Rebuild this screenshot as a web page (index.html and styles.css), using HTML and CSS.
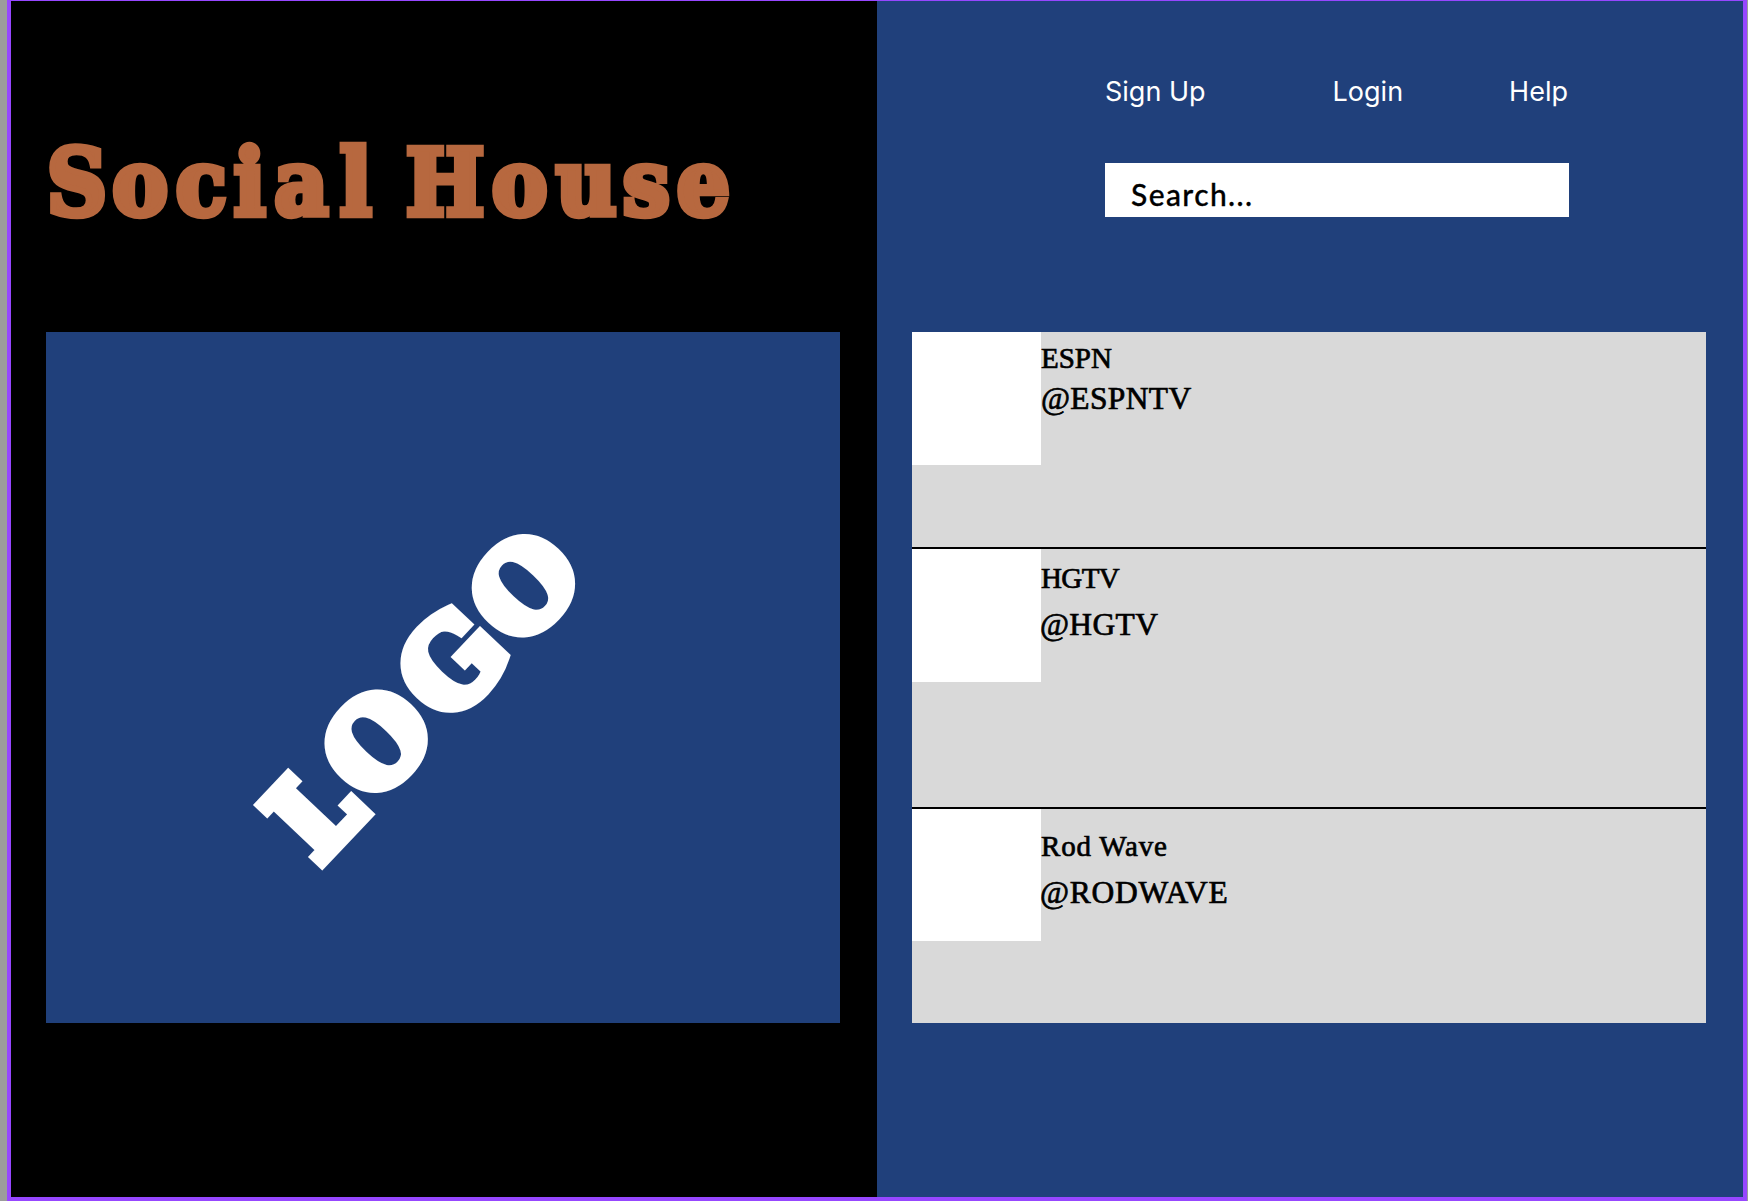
FILE: index.html
```html
<!DOCTYPE html>
<html lang="en">
<head>
<meta charset="utf-8">
<title>Social House</title>
<link rel="stylesheet" href="styles.css">
</head>
<body>
<div class="frame">
  <main class="brand">
    <h1 class="title">
      <svg class="wordmark" viewBox="0 0 720 110" role="img">
        <text y="76.5" x="1 66.5 130 188 228.5 294 330 360 446 510 577 631">Social House</text>
      </svg>
    </h1>
    <div class="card">
      <svg class="logo" viewBox="0 0 794 691">
        <text transform="translate(276.2 538.7) rotate(-46.6)" y="-6.5 -8.5 -8.5 -8.5" x="2 82 192 296"><tspan class="narrow">L</tspan>OGO</text>
      </svg>
    </div>
  </main>
  <section class="side">
    <nav class="nav">
      <a>Sign Up</a>
      <a class="login">Login</a>
      <a>Help</a>
    </nav>
    <div class="search"><span>Search...</span></div>
    <ul class="feed">
      <li class="row first">
        <div class="avatar"></div>
        <div class="who"><p class="name">ESPN</p><p class="handle">@ESPNTV</p></div>
      </li>
      <li class="row second">
        <div class="avatar"></div>
        <div class="who"><p class="name">HGTV</p><p class="handle">@HGTV</p></div>
      </li>
      <li class="row third">
        <div class="avatar"></div>
        <div class="who"><p class="name">Rod Wave</p><p class="handle">@RODWAVE</p></div>
      </li>
    </ul>
  </section>
</div>
</body>
</html>
```
FILE: styles.css
```css
* { box-sizing: border-box; margin: 0; padding: 0; }
body { width: 1748px; height: 1201px; padding: 0 1px 0 7px; background: #9c9c9c; overflow: hidden; }
.frame { display: flex; height: 1201px; border: 4px solid #9747ff; border-top-width: 1px; }
.brand { width: 866px; padding: 137px 0 0 35px; background: #000; }
.title { height: 194px; }
.wordmark { display: block; width: 720px; height: 110px; overflow: visible; font: bold 92px "DejaVu Serif Condensed", "DejaVu Serif", serif; font-stretch: condensed; fill: #b7683f; stroke: #b7683f; stroke-width: 6.5px; }
.card { width: 794px; height: 691px; background: #20407b; }
.logo { display: block; width: 794px; height: 691px; font: bold 113px "DejaVu Serif", serif; fill: #fff; stroke: #fff; stroke-width: 13px; }
.narrow { font-family: "DejaVu Serif Condensed", "DejaVu Serif", serif; font-stretch: condensed; }
.side { flex: 1; background: #20407b; padding-left: 35px; }
.nav { display: flex; justify-content: space-between; width: 463px; margin: 73px 0 0 193px; height: 36px; font: 400 27px/36px Inter, sans-serif; color: #fff; }
.login { margin-left: 21px; }
.search { width: 464px; height: 54px; margin: 53px 0 0 193px; padding: 11px 0 0 26px; background: #fff; font: 500 30px/40px Lato, sans-serif; letter-spacing: 1.4px; -webkit-text-stroke: .3px #000; color: #000; }
.feed { width: 794px; height: 691px; margin-top: 115px; background: #d9d9d9; list-style: none; }
.row { display: flex; border-bottom: 2px solid #000; }
.first { height: 217px; }
.second { height: 260px; }
.third { height: 214px; border-bottom: 0; }
.avatar { width: 129px; height: 133px; background: #fff; }
.third .avatar { height: 132px; }
.who { color: #000; font-family: "Liberation Serif", serif; -webkit-text-stroke: .7px #000; white-space: nowrap; }
.name { font-size: 29px; line-height: 36px; }
.handle { margin-top: 3px; font-size: 31.5px; line-height: 40px; letter-spacing: .35px; }
.first .who { padding-top: 8px; }
.second .who { padding-top: 11px; }
.second .name { letter-spacing: -.6px; }
.second .handle, .third .handle { margin-top: 9px; margin-left: -1px; }
.third .who { padding-top: 19px; }
.third .name { letter-spacing: .8px; }
.third .handle { letter-spacing: .75px; }
```
